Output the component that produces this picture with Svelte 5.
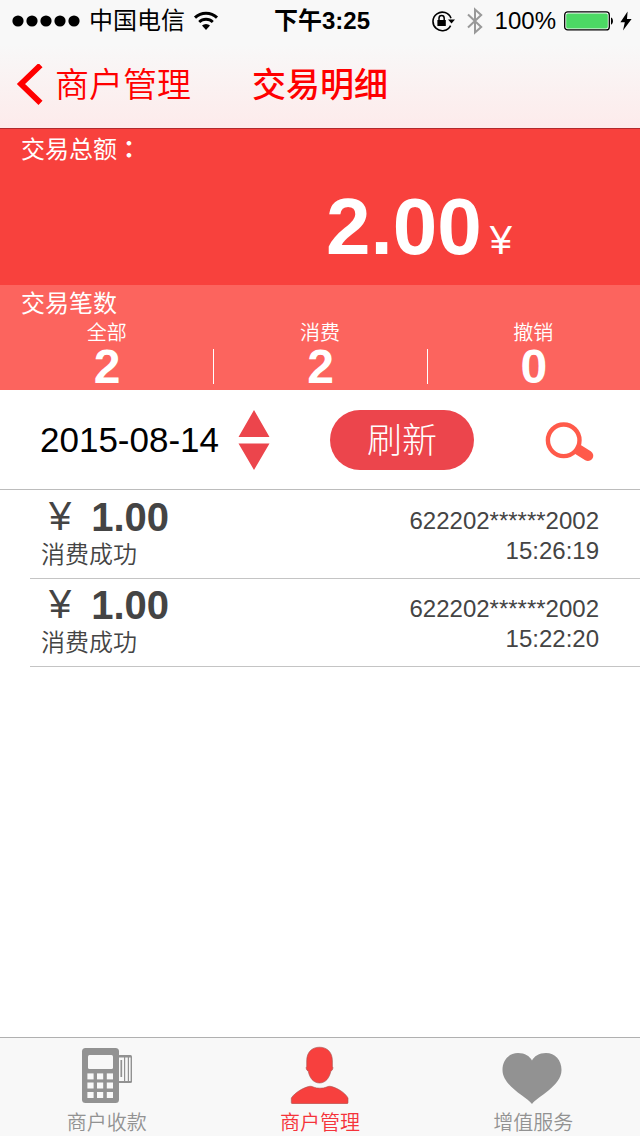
<script>
  const counts = [
    { label: '全部', value: 2 },
    { label: '消费', value: 2 },
    { label: '撤销', value: 0 }
  ];

  const records = [
    { amount: '1.00', state: '消费成功', card: '622202******2002', time: '15:26:19' },
    { amount: '1.00', state: '消费成功', card: '622202******2002', time: '15:22:20' }
  ];

  const keyColumns = [12.4, 22, 31.8];
  const keyRows = [29.4, 38.5, 48];
</script>

<div class="screen">
  <header>
    <div class="status">
      <div class="side">
        <svg width="68" height="12" viewBox="0 0 68 12" aria-hidden="true">
          {#each [6, 20, 34, 48, 62] as cx}
            <circle {cx} cy="6" r="5.6" />
          {/each}
        </svg>
        <span class="carrier">中国电信</span>
        <svg width="26" height="20" viewBox="0 0 26 20" aria-hidden="true">
          <path d="M2 6.6a15.8 15.8 0 0 1 22 0" fill="none" stroke="#000" stroke-width="3" />
          <path d="M6.2 11a9.8 9.8 0 0 1 13.6 0" fill="none" stroke="#000" stroke-width="2.8" />
          <path d="M9 14.6a5.8 5.8 0 0 1 8 0L13 19z" />
        </svg>
      </div>
      <span class="clock">下午3:25</span>
      <div class="side end">
        <svg width="24" height="22" viewBox="0 0 24 22" aria-hidden="true">
          <path d="M19.6 15.6A9.3 9.3 0 1 1 20 8.2" fill="none" stroke="#000" stroke-width="1.6" />
          <path d="M17 9.4h7l-3.5 4.2z" />
          <rect x="6.4" y="10" width="8.4" height="6" />
          <path d="M8 10.4V8.2a2.6 2.6 0 0 1 5.2 0v2.2" fill="none" stroke="#000" stroke-width="1.5" />
        </svg>
        <svg class="bluetooth" width="16" height="28" viewBox="0 0 16 28" aria-hidden="true">
          <path d="M1 7.5L14.2 20 8 25.6V2.4L14.2 8 1 20.5" fill="none" stroke="#999" stroke-width="2" />
        </svg>
        <span class="percent">100%</span>
        <svg class="battery" width="50" height="20" viewBox="0 0 50 20" aria-hidden="true">
          <rect x=".7" y=".9" width="44.6" height="18" rx="3" fill="#fff" stroke="#000" stroke-width="1.3" />
          <rect x="2.2" y="2.4" width="41.6" height="15" rx="1.6" fill="#4cd964" />
          <path d="M47 6.4c2.6.8 2.6 6.4 0 7.2z" />
        </svg>
        <svg width="12" height="20" viewBox="0 0 12 20" aria-hidden="true">
          <path d="M7.6 .5L.4 11.2h4.4L3 19.5 11.6 8H7z" />
        </svg>
      </div>
    </div>
    <div class="bar">
      <a class="back" href="#merchant">
        <svg width="28" height="42" viewBox="0 0 28 42" aria-hidden="true">
          <path d="M24.500 1.200L5 20 24.500 38.800" fill="none" stroke="#f00" stroke-width="5.800" />
        </svg>
        商户管理
      </a>
      <h1>交易明细</h1>
    </div>
  </header>

  <main>
    <section class="total">
      <h2>交易总额<span class="colon">：</span></h2>
      <p><strong>2.00</strong><span>¥</span></p>
    </section>

    <section class="counts">
      <h2>交易笔数</h2>
      <dl>
        {#each counts as item}
          <div>
            <dt>{item.label}</dt>
            <dd>{item.value}</dd>
          </div>
        {/each}
      </dl>
    </section>

    <div class="filter">
      <button class="date" type="button">
        2015-08-14
        <svg width="32" height="60" viewBox="0 0 32 60" aria-hidden="true">
          <path d="M16 0l15.500 27H.5zM.5 33.500h31L16 60z" fill="#ec454c" />
        </svg>
      </button>
      <button class="refresh" type="button">刷新</button>
      <button class="search" type="button" aria-label="查询">
        <svg width="50" height="44" viewBox="0 0 50 44" aria-hidden="true">
          <path d="M34 31.500L44 37.700" stroke="#ff5a4a" stroke-width="10.500" stroke-linecap="round" />
          <circle cx="19.700" cy="22.300" r="15.800" fill="#fff" stroke="#ff5a4a" stroke-width="4.400" />
        </svg>
      </button>
    </div>

    <ul class="records">
      {#each records as record}
        <li>
          <div>
            <p class="amount"><span>¥</span><strong>{record.amount}</strong></p>
            <p class="state">{record.state}</p>
          </div>
          <div class="detail">
            <p>{record.card}</p>
            <p>{record.time}</p>
          </div>
        </li>
      {/each}
    </ul>
  </main>

  <nav class="tabs">
    <a href="#collect">
      <svg width="64" height="60" viewBox="0 0 64 60" aria-hidden="true">
        <rect x="7" y="4" width="37" height="55" rx="3.500" fill="#929292" />
        <rect x="43" y="11" width="14" height="28" rx="1.500" fill="#929292" />
        <rect x="13" y="11" width="25" height="14" rx="1.500" fill="#f8f8f8" />
        {#each keyRows as y}
          {#each keyColumns as x}
            <rect {x} {y} width="6.200" height="6" fill="#f8f8f8" />
          {/each}
        {/each}
        <path d="M44 13.500h5v23.500h-5zM50.200 13.500h2.600v23.500h-2.600zM54 13.500h1.600v23.500H54z" fill="#f8f8f8" />
        <path d="M46.300 16v17" stroke="#929292" stroke-width="1.700" />
      </svg>
      商户收款
    </a>
    <a class="active" href="#merchant" aria-current="page">
      <svg width="64" height="60" viewBox="0 0 64 60" aria-hidden="true">
        <g fill="#f7403e" stroke="#a35552" stroke-width=".6">
          <path d="M31.500 3.200C24 3.200 18.700 8 18.700 17V22.500C17.700 23 18.200 26.500 20.200 27C21.500 34 25.500 39 31.500 39S41.500 34 42.900 27C44.900 26.500 45.400 23 44.400 22.500V17C44.400 8 39 3.200 31.500 3.200z" />
          <path d="M3.300 58.500V54c3.700-5.500 12-10.500 18.500-11.700 2.800-.3 4.200 1.900 10.200 1.900s7.400-2.200 10.200-1.900C48.700 43.500 57 48.500 60 54v4.500q0 1.200-1.200 1.200h-54.300q-1.200 0-1.200-1.200z" />
        </g>
      </svg>
      商户管理
    </a>
    <a href="#services">
      <svg width="64" height="60" viewBox="0 0 64 60" aria-hidden="true">
        <path d="M31 60C25.500 52.500 1.500 42 1.500 26 1.500 16 8 9 17 9c7 0 12 3.500 14 7.500C33 12.500 38 9 45 9c9 0 15.500 7 15.500 17C60.500 42 36.500 52.500 31 60z" fill="#929292" />
      </svg>
      增值服务
    </a>
  </nav>
</div>

<style>
  :global(body) {
    margin: 0;
    background: #fff;
  }

  .screen {
    display: flex;
    flex-direction: column;
    min-height: 100vh;
    color: #000;
    font-family: 'Liberation Sans', 'Noto Sans CJK SC', sans-serif;
  }

  h1, h2, p, ul, dl, dd {
    margin: 0;
    padding: 0;
  }

  a {
    color: inherit;
    text-decoration: none;
  }

  button {
    padding: 0;
    border: 0;
    background: none;
    color: inherit;
    font-family: inherit;
  }

  svg {
    display: block;
    flex: none;
  }

  header {
    border-bottom: 1px solid #b22a2c;
    background: linear-gradient(#f8f8f8 35%, #fdebeb);
  }

  .status {
    display: grid;
    grid-template-columns: 1fr auto 1fr;
    align-items: center;
    height: 40px;
    padding: 0 8px 0 12px;
    font-size: 24px;
    line-height: 42px;
  }

  .side {
    display: flex;
    align-items: center;
  }

  .end {
    justify-content: flex-end;
  }

  .carrier {
    margin: 0 8px 0 9px;
  }

  .clock {
    font-weight: 700;
  }

  .bluetooth {
    margin: 0 12px;
  }

  .battery {
    margin: 0 6px 0 8px;
  }

  .bar {
    display: grid;
    grid-template-columns: 1fr auto 1fr;
    align-items: center;
    height: 88px;
    padding: 0 16px;
    color: #f00;
    font-size: 34px;
    line-height: 90px;
  }

  .back {
    display: flex;
    align-items: center;
    gap: 11px;
    font-weight: 350;
    white-space: nowrap;
  }

  h1 {
    font-size: 34px;
    font-weight: 500;
  }

  h2 {
    padding-left: 21px;
    font-size: 24px;
    font-weight: 400;
    line-height: 38px;
  }

  .colon {
    font-family: 'Noto Sans CJK TC', sans-serif;
    font-weight: 700;
  }

  .total {
    height: 156px;
    background: #f8413d;
    color: #fff;
  }

  .total p {
    display: flex;
    justify-content: flex-end;
    align-items: baseline;
    gap: 8px;
    padding-right: 20%;
    line-height: 116px;
  }

  .total strong {
    font-size: 80px;
  }

  .total p span {
    font-size: 40px;
  }

  .counts {
    padding-bottom: 6px;
    background: #fc645e;
    color: #fff;
  }

  dl {
    display: grid;
    grid-template-columns: repeat(3, 1fr);
    text-align: center;
  }

  dt {
    margin-bottom: 6px;
    font-size: 20px;
    font-weight: 350;
    line-height: 20px;
  }

  dd {
    border-left: 1px solid #fff;
    font-size: 48px;
    font-weight: 700;
    line-height: 35px;
  }

  dl div:first-child dd {
    border-color: transparent;
  }

  .filter {
    display: flex;
    align-items: center;
    gap: 60px;
    height: 99px;
    padding: 0 46px 0 40px;
    border-bottom: 1px solid #bcbcbc;
  }

  .date {
    display: flex;
    align-items: center;
    gap: 19px;
    font-size: 35px;
    white-space: nowrap;
  }

  .refresh {
    width: 144px;
    height: 60px;
    padding-bottom: 4px;
    border-radius: 30px;
    background: #ec454c;
    color: #fff;
    font-size: 35px;
    font-family: 'Noto Sans CJK SC', sans-serif;
    font-weight: 300;
    line-height: 56px;
  }

  .search {
    margin-left: auto;
  }

  .records {
    padding-top: 1px;
    list-style: none;
    color: #444;
  }

  .records li {
    display: flex;
    justify-content: space-between;
    height: 87px;
    margin-left: 30px;
    padding: 0 41px 0 11px;
    border-bottom: 1px solid #c4c4c4;
    font-size: 24px;
  }

  .amount {
    display: flex;
    gap: 20px;
    padding-left: 8px;
    font-size: 40px;
    line-height: 53px;
  }

  .amount span {
    line-height: 50px;
  }

  .state {
    font-weight: 350;
    line-height: 22px;
  }

  .detail {
    padding-top: 15px;
    text-align: right;
    line-height: 30px;
  }

  .tabs {
    display: grid;
    grid-template-columns: repeat(3, 1fr);
    margin-top: auto;
    border-top: 1px solid #b0b0b0;
    background: #f8f8f8;
    color: #929292;
    font-size: 20px;
    font-family: 'Noto Sans CJK SC', sans-serif;
    font-weight: 350;
    line-height: 36px;
  }

  .tabs a {
    display: flex;
    flex-direction: column;
    align-items: center;
    height: 92px;
    padding-top: 6px;
  }

  .tabs .active {
    color: #f5333a;
  }
</style>
